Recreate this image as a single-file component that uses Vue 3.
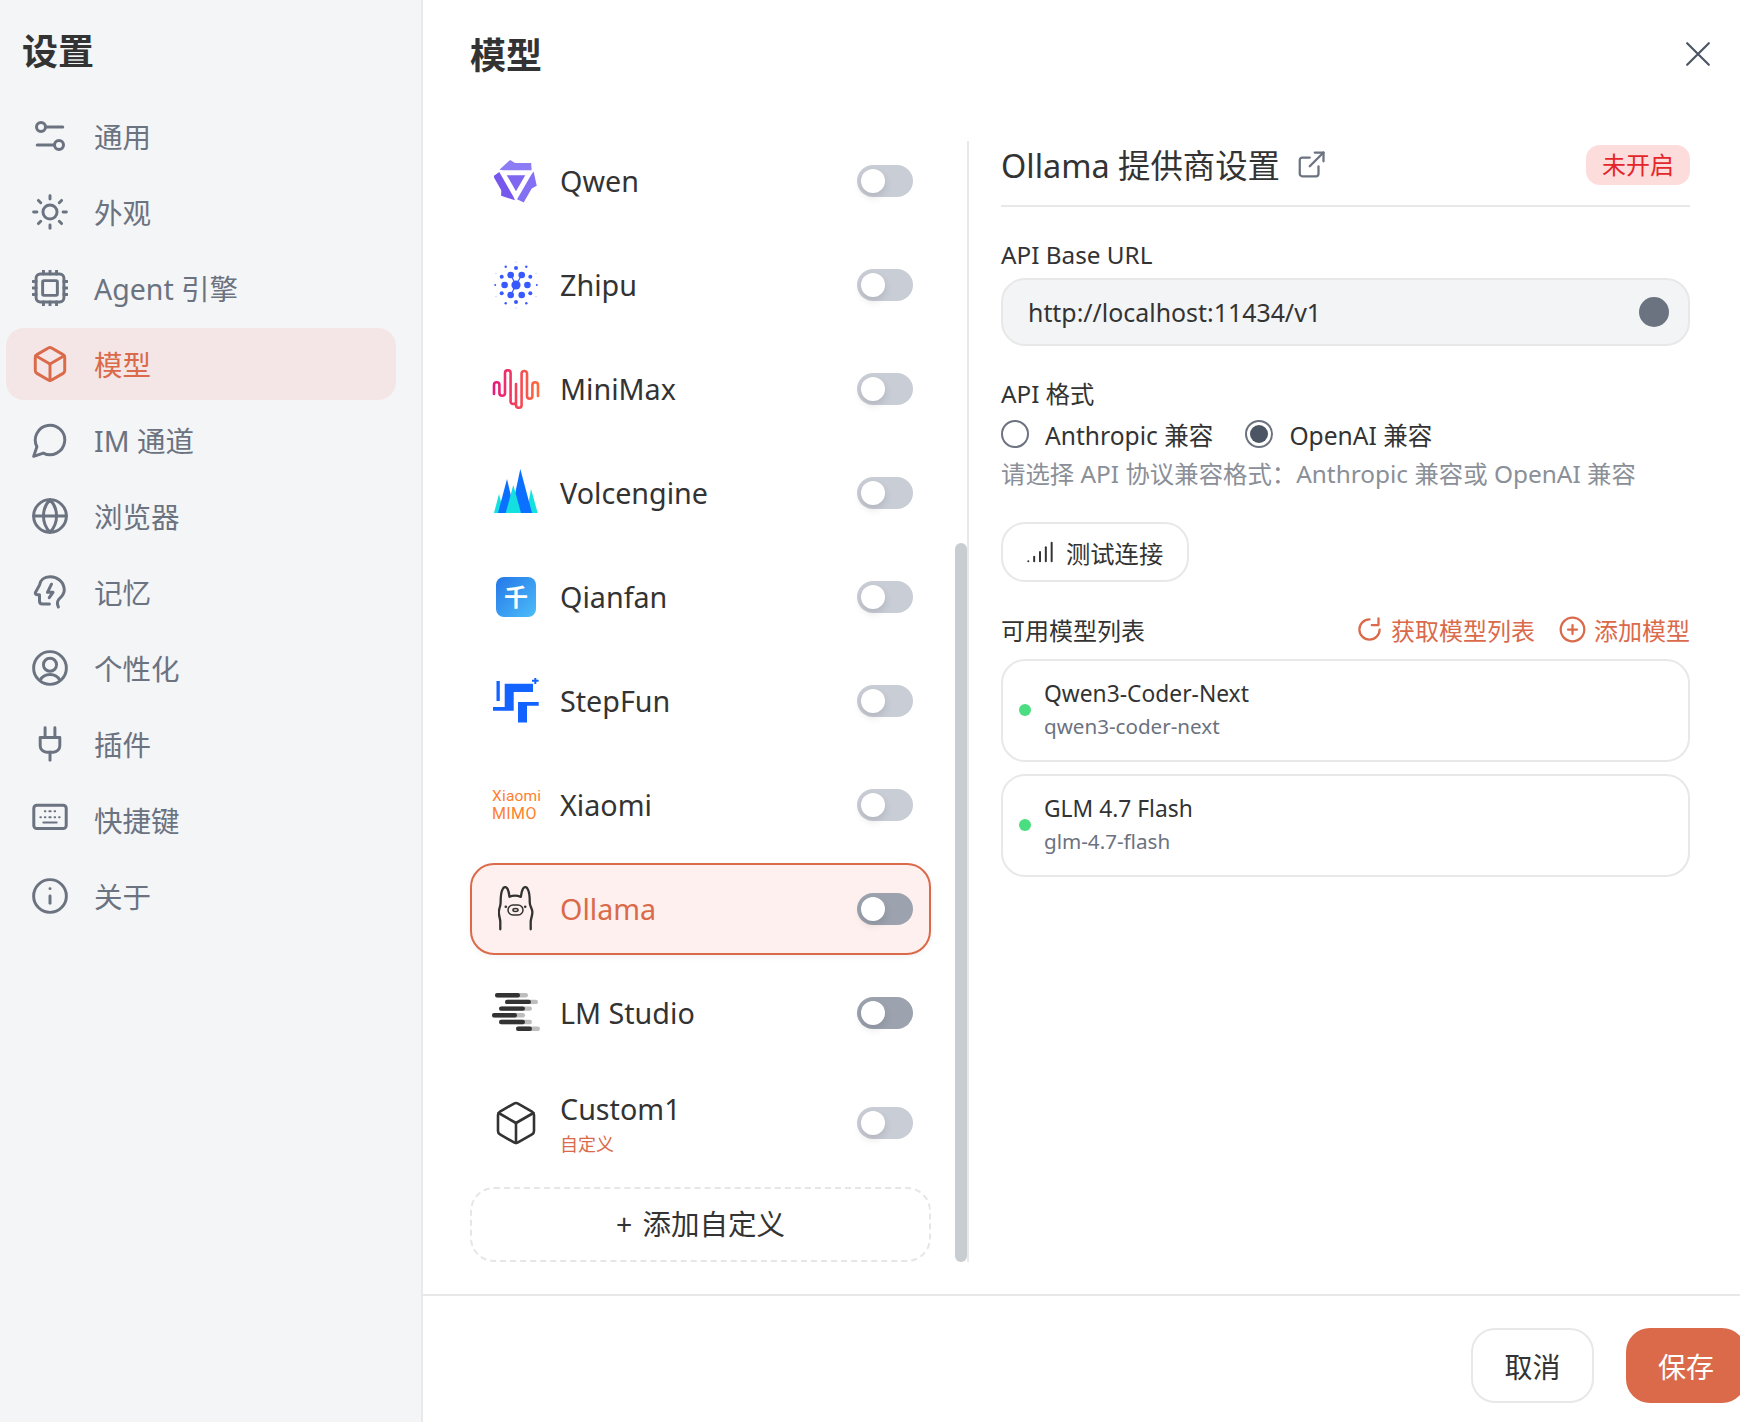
<template>
  <div class="app">
    <aside class="sidebar">
      <h1 class="side-title">设置</h1>
      <nav class="nav">
        <div v-for="item in navItems" :key="item.label" class="nav-item" :class="{ active: item.label === '模型' }">
          <svg class="nav-icon" :class="{ raised: item.raised }" :viewBox="item.vb || '1 1 22 22'" fill="none" stroke="currentColor" :stroke-width="item.vb ? 2 : 1.8" stroke-linecap="round" stroke-linejoin="round">
            <path v-for="(d, i) in item.paths" :key="i" :d="d" />
            <path v-for="(d, i) in item.thin || []" :key="'t' + i" :d="d" stroke-width="1.2" />
            <circle v-for="(c, i) in item.circles || []" :key="'c' + i" :cx="c[0]" :cy="c[1]" :r="c[2]" />
            <rect v-for="(r, i) in item.rects || []" :key="'r' + i" :x="r[0]" :y="r[1]" :width="r[2]" :height="r[3]" :rx="r[4]" />
          </svg>
          <span class="nav-label">{{ item.label }}</span>
        </div>
      </nav>
    </aside>

    <main class="main">
      <header class="main-head">
        <h2 class="main-title">模型</h2>
        <svg class="close" viewBox="0 0 24 24" fill="none" stroke="#4b5563" stroke-width="2" stroke-linecap="round"><path d="M2 2 22 22M22 2 2 22" /></svg>
      </header>

      <div class="columns">
        <section class="providers">
          <div class="provider-list">
            <div v-for="p in providers" :key="p.name" class="provider" :class="{ selected: p.name === 'Ollama', tall: p.sub }">
              <div class="logo">
                <svg v-if="p.name === 'Qwen'" width="44" height="44" viewBox="0 0 44 45">
                  <path d="M5 11 16 1 21 4H37.500L38 11.500H9Z" fill="#8d7df5" />
                  <path d="M5 11 16 1 21 4H37.500L38 11.500H9Z" fill="#8272f3" transform="rotate(120 22 22)" />
                  <path d="M5 11 16 1 21 4H37.500L38 11.500H9Z" fill="#7658ec" transform="rotate(240 22 22)" />
                  <path d="M12.500 16.500H31.500L22 33Z" fill="#7f67f0" />
                </svg>

                <svg v-else-if="p.name === 'Zhipu'" width="44" height="48" viewBox="0 0 44 48" fill="#3859ff">
                  <circle v-for="(d, i) in zhipuDots" :key="i" :cx="d[0]" :cy="d[1]" :r="d[2]" :opacity="d[3] || 1" />
                  <path d="M16.700 14 22 24 16.700 34M27.700 14 22 24" stroke="#3859ff" stroke-width="1.200" fill="none" />
                </svg>

                <svg v-else-if="p.name === 'MiniMax'" width="48" height="40" viewBox="0 0 48 40" fill="none">
                  <defs>
                    <linearGradient id="mm" x1="0" y1="0" x2="1" y2="0"><stop offset="0" stop-color="#e6197c" /><stop offset="1" stop-color="#ff6b3d" /></linearGradient>
                  </defs>
                  <path d="M2 25V16A2.700 2.700 0 0 1 7.400 16V24A2.700 2.700 0 0 0 13 24V4A2.800 2.800 0 0 1 18.600 4V33A2.800 2.800 0 0 0 24 33V15M24 24V36A2.800 2.800 0 0 0 29.600 36V4A2.800 2.800 0 0 1 35 4V27A2.700 2.700 0 0 0 40.400 27V16A2.700 2.700 0 0 1 46 16V27" stroke="url(#mm)" stroke-width="2.600" stroke-linecap="round" />
                </svg>

                <svg v-else-if="p.name === 'Volcengine'" class="volc" width="44" height="44" viewBox="0 0 44 44">
                  <path d="M5 25 0 44H10Z" fill="#14e0e0" />
                  <path d="M13 10 4 44H21Z" fill="#0b6fff" />
                  <path d="M37 20 32.700 44H43.700Z" fill="#14e0e0" />
                  <path d="M26.300 0 17 44H38Z" fill="#0b6fff" />
                  <path d="M19.300 16 11.700 44H27Z" fill="#14e0e0" />
                </svg>

                <div v-else-if="p.name === 'Qianfan'" class="qianfan">千</div>

                <svg v-else-if="p.name === 'StepFun'" width="46" height="46" viewBox="0 0 46 46" fill="#1263ff">
                  <path d="M3.500 3H6.800V23H3.500ZM11.700 5.700H40V14H20.700V32.700H0V29H11.700ZM25 24H45.700V27.700H34V44.500H25Z" />
                  <path d="M42.300 0V6M39 2.800H45.600" stroke="#1263ff" stroke-width="2" fill="none" />
                </svg>

                <div v-else-if="p.name === 'Xiaomi'" class="mimo"><span>Xiaomi</span><span class="mimo-b">MIMO</span></div>

                <svg v-else-if="p.name === 'Ollama'" width="36" height="46" viewBox="0 0 36 46" fill="none" stroke="#333" stroke-width="2.300" stroke-linecap="round" stroke-linejoin="round">
                  <path d="M2.300 43.300V35.500C2.300 33 .8 30 .8 26 .8 23 2.600 20 2.600 17 2.600 13 3 6 4.600 3.200 5.800 .6 8 .4 9.400 2.600 10.800 5 11.200 8 11.500 10.800 15 9.400 19 9.400 22.800 10.800 23.200 8 23.600 5 25 2.600 26.400.4 28.600.6 29.800 3.200 31.400 6 31.800 13 31.800 17 31.800 20 34.400 23 34.400 26 34.400 30 32.700 33 32.700 35.500V43.300" />
                  <rect x="10" y="19" width="15" height="10" rx="5" stroke-width="1.500" />
                  <ellipse cx="17.500" cy="24" rx="2.600" ry="1.500" stroke-width="1.400" />
                  <circle cx="7.800" cy="20.700" r="1.300" fill="#333" stroke="none" />
                  <circle cx="27.200" cy="20.700" r="1.300" fill="#333" stroke="none" />
                </svg>

                <svg v-else-if="p.name === 'LM Studio'" width="48" height="40" viewBox="0 0 48 40">
                  <g v-for="(b, i) in lmBars" :key="i">
                    <rect :x="b[0]" :y="i * 6.7" :width="b[2] - b[0]" height="4.400" rx="2.200" fill="#bdbdbd" />
                    <rect :x="b[0]" :y="i * 6.7" :width="b[1] - b[0]" height="4.400" rx="2.200" fill="#333" />
                  </g>
                </svg>

                <svg v-else width="44" height="44" viewBox="1 1 22 22" fill="none" stroke="#333" stroke-width="1.300" stroke-linecap="round" stroke-linejoin="round">
                  <path d="M21 8a2 2 0 0 0-1-1.730l-7-4a2 2 0 0 0-2 0l-7 4A2 2 0 0 0 3 8v8a2 2 0 0 0 1 1.730l7 4a2 2 0 0 0 2 0l7-4A2 2 0 0 0 21 16Z" />
                  <path d="m3.300 7 8.700 5 8.700-5" />
                  <path d="M12 22V12" />
                </svg>
              </div>

              <div class="provider-text">
                <div class="provider-name">{{ p.name }}</div>
                <div v-if="p.sub" class="provider-sub">{{ p.sub }}</div>
              </div>
              <div class="toggle" :class="{ dark: p.dark }"><i></i></div>
            </div>
            <div class="add-custom">+ 添加自定义</div>
          </div>
          <div class="track"><div class="thumb"></div></div>
        </section>

        <section class="detail">
          <div class="detail-head">
            <div class="detail-title">
              <span class="detail-name">Ollama 提供商设置</span>
              <svg width="30" height="30" viewBox="0 0 24 24" fill="none" stroke="#6b7280" stroke-width="1.800" stroke-linecap="round" stroke-linejoin="round">
                <path d="M15 2h7v7" /><path d="M11 13 22 2" /><path d="M18 13v6a2 2 0 0 1-2 2H5a2 2 0 0 1-2-2V8a2 2 0 0 1 2-2h6" />
              </svg>
            </div>
            <span class="badge">未开启</span>
          </div>

          <label class="field-label base-label">API Base URL</label>
          <div class="url-input">
            <span>http://localhost:11434/v1</span>
            <i class="url-dot"></i>
          </div>

          <label class="field-label format-label">API 格式</label>
          <div class="radios">
            <span class="radio"><i class="radio-mark"></i>Anthropic 兼容</span>
            <span class="radio"><i class="radio-mark on"></i>OpenAI 兼容</span>
          </div>
          <p class="hint">请选择 API 协议兼容格式：Anthropic 兼容或 OpenAI 兼容</p>

          <button class="test-btn" type="button">
            <svg width="28" height="28" viewBox="0 0 24 24" fill="none" stroke="#333" stroke-width="1.700" stroke-linecap="round">
              <path d="M2 20h.01" /><path d="M7 20v-4" /><path d="M12 20v-8" /><path d="M17 20V8" /><path d="M22 4v16" />
            </svg>
            测试连接
          </button>

          <div class="list-head">
            <span>可用模型列表</span>
            <div class="list-actions">
              <span class="action">
                <svg width="27" height="27" viewBox="0 0 24 24" fill="none" stroke="currentColor" stroke-width="2" stroke-linecap="round" stroke-linejoin="round">
                  <path d="M21 12a9 9 0 1 1-9-9" /><path d="M20 2v6h-6" />
                </svg>
                获取模型列表
              </span>
              <span class="action">
                <svg width="27" height="27" viewBox="0 0 24 24" fill="none" stroke="currentColor" stroke-width="2" stroke-linecap="round">
                  <circle cx="12" cy="12" r="10.500" /><path d="M8 12h8" /><path d="M12 8v8" />
                </svg>
                添加模型
              </span>
            </div>
          </div>

          <div v-for="m in models" :key="m.id" class="model-card">
            <i class="model-dot"></i>
            <div>
              <div class="model-name">{{ m.name }}</div>
              <div class="model-id">{{ m.id }}</div>
            </div>
          </div>
        </section>
      </div>

      <footer class="footer">
        <button class="btn-cancel" type="button">取消</button>
        <button class="btn-save" type="button">保存</button>
      </footer>
    </main>
  </div>
</template>

<script setup>
const navItems = [
  { label: "通用", vb: "0 0 24 24", paths: ["M9 6h11.500", "M3.500 18H15"], circles: [[6, 6, 3], [18, 18, 3]] },
  { label: "外观", paths: ["M12 2v2", "M12 20v2", "m4.930 4.930 1.410 1.410", "m17.660 17.660 1.410 1.410", "M2 12h2", "M20 12h2", "m6.340 17.660-1.410 1.410", "m19.070 4.930-1.410 1.410"], circles: [[12, 12, 4.300]] },
  {
    label: "Agent 引擎",
    paths: ["M8 1.500v2", "M12 1.500v2", "M16 1.500v2", "M8 20.500v2", "M12 20.500v2", "M16 20.500v2", "M1.500 8h2", "M1.500 12h2", "M1.500 16h2", "M20.500 8h2", "M20.500 12h2", "M20.500 16h2"],
    rects: [[3.500, 3.500, 17, 17, 2.500], [7.500, 7.500, 9, 9, 0.800]],
  },
  { label: "模型", paths: ["M21 8a2 2 0 0 0-1-1.730l-7-4a2 2 0 0 0-2 0l-7 4A2 2 0 0 0 3 8v8a2 2 0 0 0 1 1.730l7 4a2 2 0 0 0 2 0l7-4A2 2 0 0 0 21 16Z", "m3.300 7 8.700 5 8.700-5", "M12 22V12"] },
  { label: "IM 通道", paths: ["M7.900 20A9 9 0 1 0 4 16.100L2 22Z"] },
  { label: "浏览器", paths: ["M12 2a14.500 14.500 0 0 0 0 20 14.500 14.500 0 0 0 0-20", "M2 12h20"], circles: [[12, 12, 10]] },
  { label: "记忆", vb: "0 0 24 24", paths: ["M17.600 22c-.8-1.600-1.200-3 .2-5 1.800-2 3.700-3.400 3.700-6.200C21.500 5.500 17 1.800 12 1.800 8 1.800 5.400 4.200 5 7.400L2.300 12.300c-.3.700.1 1.500 1 1.500H5V18c0 1.200.8 2 2 2h4.600", "M13 6.800 10.300 12.200H14L11.500 15.800"] },
  { label: "个性化", paths: ["M6 19.500c1-2 3-3.500 6-3.500s5 1.500 6 3.500"], circles: [[12, 12, 10], [12, 10, 4]] },
  { label: "插件", paths: ["M12 22v-5", "M9 8V2", "M15 8V2", "M18 8v5a4 4 0 0 1-4 4h-4a4 4 0 0 1-4-4V8Z"] },
  { label: "快捷键", vb: "0 0 24 24", raised: true, paths: [], thin: ["M8.500 7.500h.5", "M11.500 7.500h1", "M15 7.500h.5", "M5.500 11.500h.5", "M8.500 11.500h.5", "M11.500 11.500h1", "M15 11.500h.5", "M18 11.500h.5", "M7.500 15h9"], rects: [[1.200, 3.500, 21.600, 15.500, 2]] },
  { label: "关于", paths: ["M12 16.500v-4.500", "M12 7.500h.01"], circles: [[12, 12, 10]] },
];

const providers = [
  { name: "Qwen" },
  { name: "Zhipu" },
  { name: "MiniMax" },
  { name: "Volcengine" },
  { name: "Qianfan" },
  { name: "StepFun" },
  { name: "Xiaomi" },
  { name: "Ollama", dark: true },
  { name: "LM Studio", dark: true },
  { name: "Custom1", sub: "自定义" },
];

const zhipuDots = [
  [22, 24, 4.600], [10.600, 24, 3.300], [33.400, 24, 3.300],
  [16.700, 14, 3.300], [27.700, 14, 3.300], [16.700, 34, 3.300], [27.700, 34, 3.300],
  [7.700, 15.700, 2], [36.300, 15.700, 2], [7.700, 32.300, 2], [36.300, 32.300, 2],
  [22, 7, 2], [22, 41, 2],
  [11.700, 5.700, 1.200], [32.300, 5.700, 1.200], [11.700, 42.300, 1.200], [32.300, 42.300, 1.200],
  [1.200, 24, 1], [42.800, 24, 1],
  [22, 1, 0.600, 0.500], [22, 47, 0.600, 0.500], [2, 12.300, 0.600, 0.400], [42, 12.300, 0.600, 0.400], [2, 35.700, 0.600, 0.400], [42, 35.700, 0.600, 0.400],
];

// left, dark end, grey end
const lmBars = [
  [3, 28, 36],
  [13, 39, 46],
  [7, 33, 40],
  [0, 25, 33],
  [7, 33, 40],
  [24, 40, 48],
];

const models = [
  { name: "Qwen3-Coder-Next", id: "qwen3-coder-next" },
  { name: "GLM 4.7 Flash", id: "glm-4.7-flash" },
];
</script>

<style scoped>
.app {
  display: flex;
  width: 1740px;
  height: 1422px;
  overflow: hidden;
  background: #fff;
  color: #333;
  font-family: "Noto Sans", "Noto Sans CJK SC", sans-serif;
}

.sidebar {
  width: 423px;
  flex: none;
  box-sizing: border-box;
  background: #f4f5f7;
  border-right: 2px solid #e9e9e9;
  padding: 26px 25px 0 6px;
}
.side-title {
  margin: 0 0 22px 16px;
  font-size: 36px;
  line-height: 52px;
  font-weight: 700;
  color: #333;
}
.nav { display: flex; flex-direction: column; gap: 4px; margin-top: 7px; }
.nav-item {
  display: flex;
  align-items: center;
  height: 72px;
  padding-left: 26px;
  gap: 26px;
  border-radius: 18px;
  font-size: 28.500px;
  color: #6b7280;
}
.nav-item.active { background: #f4e6e6; color: #da6a4a; }
.nav-label { margin-top: -2px; }
.nav-icon { width: 36px; height: 36px; flex: none; }
.nav-icon.raised { margin-top: -4px; }

.main { flex: 1; min-width: 0; display: flex; flex-direction: column; }
.main-head {
  display: flex;
  justify-content: space-between;
  align-items: center;
  height: 108px;
  padding: 0 29px 0 47px;
  box-sizing: border-box;
}
.main-title { margin: -2px 0 0; font-size: 36px; font-weight: 700; color: #333; }
.close { width: 26px; height: 26px; }

.columns { flex: 1; min-height: 0; display: flex; padding: 33px 0 32px 47px; }

.providers { display: flex; width: 499px; flex: none; box-sizing: border-box; border-right: 2px solid #e8e8e8; }
.provider-list { width: 461px; flex: none; display: flex; flex-direction: column; gap: 12px; margin-top: -6px; }
.provider {
  display: flex;
  align-items: center;
  height: 92px;
  flex: none;
  box-sizing: border-box;
  padding: 0 16px 0 22px;
  border: 2px solid transparent;
  border-radius: 24px;
}
.provider.tall { height: 104px; }
.provider.selected { border-color: #da6a4a; background: #fdf0ee; color: #da6a4a; box-shadow: 0 2px 6px rgba(0, 0, 0, 0.05); }
.logo { width: 44px; height: 48px; flex: none; display: flex; align-items: center; justify-content: center; }
.logo svg { flex: none; }
.logo .volc { margin-bottom: 4px; }
.provider-text { flex: 1; margin-left: 22px; }
.provider-name { font-size: 28.700px; line-height: 36px; }
.provider-sub { font-size: 18px; line-height: 24px; margin-top: 5px; color: #da6a4a; }
.toggle {
  position: relative;
  width: 56px;
  height: 32px;
  border-radius: 16px;
  background: #c9cdd5;
}
.toggle.dark { background: #9ca3af; }
.toggle i {
  position: absolute;
  left: 4px;
  top: 4px;
  width: 24px;
  height: 24px;
  border-radius: 50%;
  background: #fff;
  box-shadow: 0 4px 8px rgba(0, 0, 0, 0.12);
}
.qianfan {
  width: 40px;
  height: 40px;
  border-radius: 8px;
  background: linear-gradient(135deg, #2477e8, #4cbdf9);
  color: #fff;
  font-size: 24px;
  font-weight: 700;
  line-height: 40px;
  text-align: center;
}
.mimo { display: flex; flex-direction: column; flex: none; font-family: "Roboto", sans-serif; font-size: 15.500px; line-height: 17px; color: #ff7f2e; width: 48px; letter-spacing: 0.2px; }
.mimo-b { font-size: 16px; letter-spacing: 0.4px; }
.add-custom {
  height: 75px;
  flex: none;
  box-sizing: border-box;
  padding-bottom: 4px;
  border: 2px dashed #e6e6e6;
  border-radius: 24px;
  display: flex;
  align-items: center;
  justify-content: center;
  font-size: 28.500px;
  word-spacing: 3px;
}
.track { flex: 1; display: flex; padding-left: 24px; box-sizing: border-box; align-items: flex-end; }
.thumb { width: 12px; height: 719px; border-radius: 6px; background: #c8cdd2; }

.detail { flex: 1; min-width: 0; padding: 0 50px 0 32px; }
.detail-head {
  display: flex;
  justify-content: space-between;
  align-items: flex-start;
  height: 66px;
  box-sizing: border-box;
  border-bottom: 2px solid #e8e8e8;
}
.detail-title { display: flex; align-items: center; gap: 16px; height: 48px; font-size: 32.400px; }
.detail-name { margin-top: -4px; }
.badge {
  width: 104px;
  height: 40px;
  margin-top: 4px;
  border-radius: 14px;
  background: #fddcdc;
  color: #e5252a;
  font-size: 24px;
  line-height: 40px;
  text-align: center;
}
.field-label { display: block; font-size: 24.300px; line-height: 34px; }
.base-label { margin-top: 31px; }
.url-input {
  display: flex;
  align-items: center;
  justify-content: space-between;
  height: 68px;
  margin-top: 6px;
  box-sizing: border-box;
  padding: 0 19px 0 25px;
  border: 2px solid #e8e8e8;
  border-radius: 24px;
  background: #f3f4f6;
  font-size: 24.900px;
}
.url-dot { width: 30px; height: 30px; border-radius: 50%; background: #6b7280; }
.format-label { margin-top: 31px; }
.radios { display: flex; gap: 32px; margin-top: 5px; height: 36px; align-items: center; font-size: 24.600px; }
.radio { display: flex; align-items: center; gap: 16px; }
.radio-mark {
  width: 28px;
  height: 28px;
  box-sizing: border-box;
  border: 2px solid #6b7280;
  border-radius: 50%;
  display: flex;
  align-items: center;
  justify-content: center;
}
.radio-mark.on::after { content: ""; width: 18px; height: 18px; border-radius: 50%; background: #4b5563; }
.hint { margin: 5px 0 0; font-size: 24.400px; line-height: 34px; color: #8a8f98; white-space: nowrap; }
.test-btn {
  display: flex;
  align-items: center;
  gap: 12px;
  height: 60px;
  width: 188px;
  margin-top: 31px;
  box-sizing: border-box;
  padding: 0 0 0 23px;
  border: 2px solid #e8e8e8;
  border-radius: 24px;
  background: #fff;
  color: #333;
  font: inherit;
  font-size: 24.300px;
}
.list-head {
  display: flex;
  justify-content: space-between;
  align-items: center;
  height: 36px;
  margin-top: 29px;
  font-size: 24px;
}
.list-actions { display: flex; gap: 24px; color: #da6a4a; }
.action { display: flex; align-items: center; gap: 8px; }
.model-card {
  display: flex;
  align-items: center;
  height: 103px;
  margin-top: 12px;
  box-sizing: border-box;
  padding-left: 16px;
  gap: 13px;
  border: 2px solid #e8e8e8;
  border-radius: 24px;
}
.model-card + .model-card { margin-top: 12px; }
.model-dot { width: 12px; height: 12px; border-radius: 50%; background: #4ade80; margin-bottom: 1px; }
.model-name { font-size: 22.800px; line-height: 38px; }
.model-id { font-size: 20.600px; line-height: 26px; margin-bottom: 8px; color: #6b7280; }

.footer {
  height: 128px;
  flex: none;
  box-sizing: border-box;
  border-top: 2px solid #e8e8e8;
  display: flex;
  justify-content: flex-end;
  align-items: flex-start;
  gap: 32px;
  padding-top: 32px;
  margin-right: -6px;
}
.footer button { height: 75px; border-radius: 24px; font: inherit; font-size: 28px; }
.btn-cancel { width: 123px; background: #fff; border: 2px solid #e8e8e8; color: #333; }
.btn-save { width: 120px; background: #da6a4a; border: none; color: #fff; }
</style>

<style>
html, body { margin: 0; overflow: hidden; }
</style>
